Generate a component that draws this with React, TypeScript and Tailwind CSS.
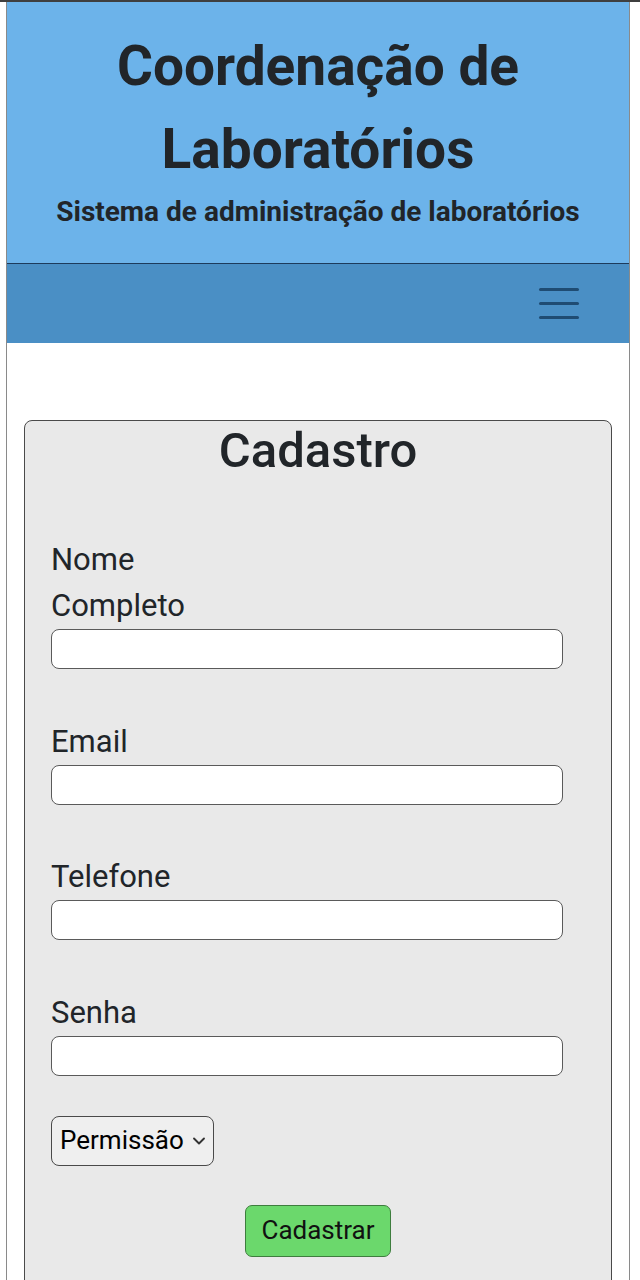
import { ChevronDown } from "lucide-react";

const FIELDS = [
  { id: "nome", label: "Nome Completo", type: "text", narrow: true },
  { id: "email", label: "Email", type: "email", narrow: false },
  { id: "telefone", label: "Telefone", type: "tel", narrow: false },
  { id: "senha", label: "Senha", type: "password", narrow: false },
];

export default function App() {
  return (
    <div className="min-h-[1280px] border-t-2 border-[#3f3f3f] bg-white font-['Roboto',sans-serif] text-[#212529]">
      <div className="ml-[6px] min-h-[1278px] w-[624px] border-x border-[#8a8a8a]">
        {/* Header */}
        <header className="border-b border-[#1d3b5c] bg-[#6cb3ea] pb-[34px] pt-[23px] text-center">
          <h1 className="text-[55px] font-bold leading-[83px]">
            Coordenação de
            <br />
            Laboratórios
          </h1>
          <p className="mt-[4px] text-[28px] font-bold leading-[34px]">
            Sistema de administração de laboratórios
          </p>
        </header>

        {/* Nav */}
        <nav className="flex h-[79px] items-center justify-end bg-[#4a8fc5] pr-[50px]">
          <button className="flex w-[40px] flex-col gap-[11px]" aria-label="menu">
            <span className="block h-[3px] w-full rounded-full bg-[#1f4c73]" />
            <span className="block h-[3px] w-full rounded-full bg-[#1f4c73]" />
            <span className="block h-[3px] w-full rounded-full bg-[#1f4c73]" />
          </button>
        </nav>

        {/* Form card */}
        <div className="px-[17px] pt-[77px]">
          <div className="min-h-[900px] rounded-[8px] border border-[#4a4a4a] bg-[#e9e9e9] px-[26px] pt-[1px]">
            <h2 className="text-center text-[49px] font-medium leading-[58px]">
              Cadastro
            </h2>

            <div className="mt-[57px] flex flex-col gap-[49.5px]">
              {FIELDS.map((f) => (
                <div key={f.id}>
                  <label
                    htmlFor={f.id}
                    className={`block text-[31px] leading-[46px] ${f.narrow ? "w-[160px]" : ""}`}
                  >
                    {f.label}
                  </label>
                  <input
                    id={f.id}
                    type={f.type}
                    className="block h-[40px] w-[512px] rounded-[8px] border-[1.5px] border-[#5a5a5a] bg-white"
                  />
                </div>
              ))}
            </div>

            <div className="relative mt-[40px] w-[163px]">
              <select className="h-[50px] w-full appearance-none rounded-[8px] border-[1.5px] border-[#4a4a4a] bg-[#efefef] pl-[8px] text-[26px] text-black">
                <option>Permissão</option>
              </select>
              <ChevronDown
                size={20}
                strokeWidth={2.25}
                className="pointer-events-none absolute right-[5px] top-[15px] text-[#333]"
              />
            </div>

            <div className="mt-[39px] flex justify-center">
              <button className="h-[52px] w-[146px] rounded-[7px] border border-[#3e7d3e] bg-[#6bd86c] text-[26px] text-[#111]">
                Cadastrar
              </button>
            </div>
          </div>
        </div>
      </div>
    </div>
  );
}
